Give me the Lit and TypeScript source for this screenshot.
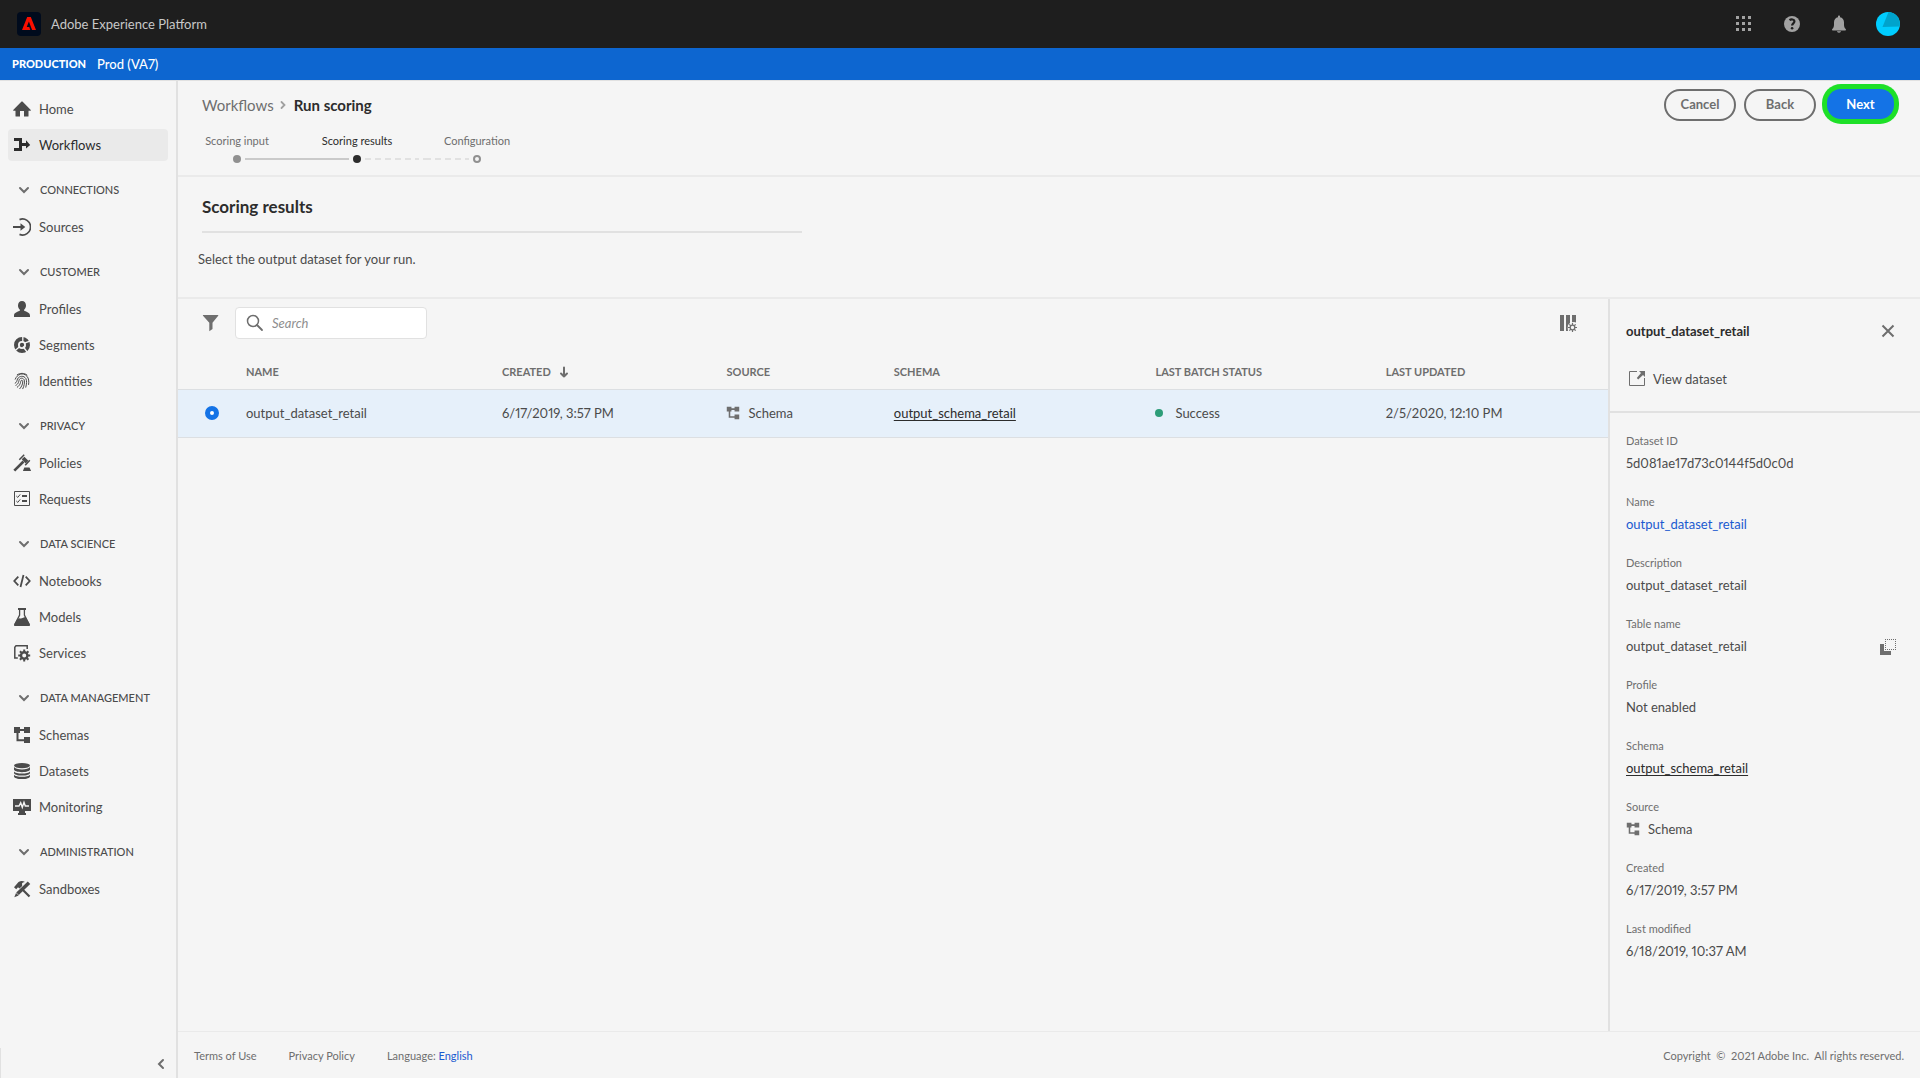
import { LitElement, html, svg, css, nothing } from "lit";
import type { SVGTemplateResult } from "lit";
import { customElement, property, state } from "lit/decorators.js";
import { classMap } from "lit/directives/class-map.js";

const gearTeeth = (cx: number, cy: number, inner: number, outer: number, width: number) =>
  [0, 45, 90, 135, 180, 225, 270, 315].map(
    (a) => svg`<path d="M${cx} ${cy - inner}V${cy - outer}" stroke="currentColor" stroke-width=${width} transform="rotate(${a} ${cx} ${cy})"/>`
  );

const GLYPHS: Record<string, SVGTemplateResult> = {
  home: svg`<path fill="currentColor" d="M9 1.4a.6.6 0 0 1 .45.2L17.8 10c.3.35.1.8-.35.8H15.5V16a.5.5 0 0 1-.5.5h-4V11H7v5.500H3a.5.5 0 0 1-.5-.5v-5.200H.55c-.45 0-.65-.45-.35-.8L8.550 1.600A.6.6 0 0 1 9 1.400z"/>`,
  workflows: svg`<path fill="currentColor" d="M1 2h8v5h4V4.300L17.200 9 13 12.500V10H9v5H1v-3h5V5H1z"/>`,
  sources: svg`<path fill="none" stroke="currentColor" stroke-width="1.700" d="M6.500 1.600A8 8 0 1 1 6.500 16.400"/><path fill="currentColor" d="M0 8h7.500V5.200L12.300 9 7.500 12.800V10H0z"/>`,
  profiles: svg`<path fill="currentColor" d="M9 1c2.500 0 4 1.900 4 4.400 0 1.700-.7 3.200-1.700 4.200-.3.400-.3 1.200.3 1.500C14.300 12 17 13 17 15.700V17H1v-1.300C1 13 3.700 12 6.400 11.100c.6-.3.600-1.100.3-1.500C5.700 8.600 5 7.100 5 5.400 5 2.900 6.500 1 9 1z"/>`,
  segments: svg`<circle cx="9" cy="9" r="6" fill="none" stroke="currentColor" stroke-width="4"/><circle cx="9" cy="9" r="2.200" fill="currentColor"/><path class="cut" d="M9.800 6V0M11.500 7.200 17.500 4.800M10 10.500l4.500 6M6.500 10.800 2 14.800" stroke-width="1.300"/>`,
  identities: svg`<g fill="none" stroke="currentColor" stroke-width="1" stroke-linecap="round"><path d="M4.200 2.800C7 .8 11.300.800 14 3"/><path d="M2.200 7.200C4 2.300 10-.3 14 4.300c1.800 2.200 2.100 5 1.600 8.200"/><path d="M2.200 11.200c1.800-.8 1.700-2.800 2.300-4.200C6.300 3.500 11 3.500 12.800 6.500c1.200 2.200.9 5.300 0 8.700"/><path d="M2.900 13.300c3-1.500 2.700-4 3.300-5.600 1-2.200 4.200-2 5 .3.700 2.500-.1 6-1.400 8.700"/><path d="M4.300 15.200C7.300 13 7.500 10.700 7.800 9c.3-1 1.700-.9 1.900.2.200 2.500-.9 5.400-2.900 7.500"/></g>`,
  policies: svg`<path fill="none" stroke="currentColor" stroke-width="2.600" d="M1.300 16.700 10.500 7.500"/><path fill="none" stroke="currentColor" stroke-width="1.500" d="M6.300 5.700 11.200.8M12.200 11.200l4.600-5"/><path fill="currentColor" d="m8.700 5.300 2.700-2.600 4 4-2.700 2.700zM11.300 13.500h5.200l1.500 3.200V17h-8v-.3z"/>`,
  requests: svg`<path fill="none" stroke="currentColor" d="M1.500 1.500h15v14h-15z"/><path fill="none" stroke="currentColor" stroke-width="1" d="m3.300 6 1.500 1.400 2.400-3M3.300 11l1.500 1.400 2.400-3"/><path fill="currentColor" d="M9 5h5v2H9zM9 10h5v2H9z"/>`,
  notebooks: svg`<path fill="none" stroke="currentColor" stroke-width="1.800" d="M5.300 4.700 1.300 9l4 4.300M12.700 4.700l4 4.300-4 4.300M10.500 3l-3 12"/>`,
  models: svg`<path fill="currentColor" d="M5 0h8v2H5z"/><path fill="none" stroke="currentColor" stroke-width="1.300" d="M6.600 1v6L2 16.400M11.400 1v6L16 16.400"/><path fill="currentColor" d="m4.200 11 2.300-.8c2 .8 4-.8 6.300-1.200L17 16.500c.2.900-.2 1.500-1 1.500H2c-.8 0-1.200-.6-1-1.500z"/>`,
  services: svg`<path fill="none" stroke="currentColor" stroke-width="1.500" d="M4.800 14H1.800V3.200L3 1.800h11.200V5"/><circle cx="11.200" cy="11.500" r="3.200" fill="none" stroke="currentColor" stroke-width="2.400"/>${gearTeeth(11.200, 11.500, 3.500, 6, 2)}`,
  schemas: svg`<path fill="none" stroke="currentColor" stroke-width="2" d="M6 4h6M4.500 5v9.200H12"/><path fill="currentColor" d="M1 1h6v6H1zM11 1h6v6h-6zM11 11h6v6h-6z"/>`,
  datasets: svg`<ellipse cx="9" cy="3.600" rx="8" ry="2.600" fill="currentColor"/><path fill="currentColor" d="M1 5c1 1.700 4 2.400 8 2.400S16 6.700 17 5v2.600c0 1.500-3.500 2.600-8 2.600S1 9.100 1 7.600zM1 9.400c1 1.400 4 2.100 8 2.100s7-.7 8-2.100v1.500c0 1.500-3.500 2.600-8 2.600s-8-1.100-8-2.600zM1 12.700c1 1.400 4 2.100 8 2.100s7-.7 8-2.100v1.700c0 1.500-3.500 2.600-8 2.600s-8-1.100-8-2.600z"/>`,
  monitoring: svg`<path fill="currentColor" d="M0 1h18v12h-6v2h1v2H5v-2h1v-2H0z"/><path class="cut" fill="none" stroke-width="1.400" d="M2 8h4l1.700-3.300 1.600 4.600 1.700-5L12.300 8H16"/>`,
  sandboxes: svg`<path fill="none" stroke="currentColor" stroke-width="2.200" d="M9 9l7.500 7.500"/><path fill="none" stroke="currentColor" stroke-width="3.600" d="m16 2.800-11.500 11"/><path fill="currentColor" d="M3 13 5.700 15.600 1.300 17.200zM1 7.200 5.500 2C8 .5 10 .7 12 2c-1.700.2-2.600.6-3 1.500L9.200 6 6.500 8.600 5 7.200 3.200 9.200z"/>`,
  down: svg`<path fill="none" stroke="currentColor" stroke-width="2" stroke-linecap="round" d="m5 7 4 4 4-4"/>`,
  left: svg`<path fill="none" stroke="currentColor" stroke-width="2" stroke-linecap="round" d="M11 5 7 9l4 4"/>`,
  right: svg`<path fill="none" stroke="currentColor" stroke-width="1.800" stroke-linecap="round" d="m6.500 6 3 3-3 3"/>`,
  apps: svg`<path fill="currentColor" d="M1 1h3v3H1zM7 1h3v3H7zM13 1h3v3h-3zM1 7h3v3H1zM7 7h3v3H7zM13 7h3v3h-3zM1 13h3v3H1zM7 13h3v3H7zM13 13h3v3h-3z"/>`,
  help: svg`<circle cx="10" cy="9" r="8" fill="currentColor"/><path class="dark" fill="none" stroke-width="2.200" d="M7.500 5.200c1.600-1.200 4.900-1 4.900 1.300 0 1.800-2.300 1.900-2.300 4"/><circle class="dark-dot" cx="10.100" cy="13.300" r="1.300"/>`,
  bell: svg`<path fill="currentColor" d="M9 2.200V1.500c0-.7.400-1 1-1s1 .3 1 1v.7c2.500.5 4 2.300 4 5v2.600c0 2 .6 3.200 1.700 4.200.5.500.3 1.500-.4 1.500H3.700c-.7 0-.9-1-.4-1.500C4.400 13 5 11.800 5 9.800V7.200c0-2.700 1.500-4.500 4-5zM8 16.300h4c0 .8-.8 1.400-2 1.400s-2-.6-2-1.400z"/>`,
  filter: svg`<path fill="currentColor" d="M1.300 1h14.600c.4 0 .6.500.3.800L10.500 8.700V15L7.300 17.200V8.700L1 1.800c-.3-.3-.1-.8.3-.8z"/>`,
  search: svg`<circle cx="7" cy="7" r="5.500" fill="none" stroke="currentColor" stroke-width="1.500"/><path fill="none" stroke="currentColor" stroke-width="1.800" stroke-linecap="round" d="m11 11 5 5"/>`,
  columns: svg`<path fill="currentColor" d="M1 1h4v16H1zM7 1h4v8l-2 2-.3 3L9 17H7zM13 1h4v7.500l-2-.5-2 .3z"/><circle cx="13.500" cy="13.500" r="2.300" fill="none" stroke="currentColor" stroke-width="1.300"/>${gearTeeth(13.500, 13.500, 2.500, 4.500, 1.200)}`,
  sort: svg`<path fill="none" stroke="currentColor" stroke-width="2" stroke-linecap="round" stroke-linejoin="round" d="M9 4.500v9M6 10.500 9 13.500l3-3"/>`,
  close: svg`<path fill="none" stroke="currentColor" stroke-width="2" d="m3.500 3.500 11 11M14.500 3.500l-11 11"/>`,
  open: svg`<path fill="none" stroke="currentColor" d="M9 1.500H1.500v14h15V8"/><path fill="currentColor" d="M11 1h6v6l-2-2-4.800 4.500L8.800 8 13 3z"/>`,
  copy: svg`<path fill="currentColor" d="M1 6h4v7h7v4H1z"/><path fill="none" stroke="currentColor" stroke-dasharray="1 1" d="M6 1.500h11M6 11.500h11M6.500 1v11M16.500 1v11"/>`,
};

const icon = (name: string, extra = "") =>
  html`<svg class="icon ${extra}" viewBox="0 0 18 18" aria-hidden="true">${GLYPHS[name]}</svg>`;

const ICON_STYLES = css`
  * {
    box-sizing: border-box;
  }
  .icon {
    display: block;
    width: 18px;
    height: 18px;
    flex: none;
  }
  button {
    font: inherit;
    color: inherit;
    background: none;
    border: 0;
    padding: 0;
    cursor: pointer;
  }
  a {
    color: inherit;
    text-decoration: none;
  }
`;

interface NavItem {
  icon: string;
  label: string;
}
interface NavGroup {
  title?: string;
  items: NavItem[];
}

const NAV: NavGroup[] = [
  { items: [{ icon: "home", label: "Home" }, { icon: "workflows", label: "Workflows" }] },
  { title: "CONNECTIONS", items: [{ icon: "sources", label: "Sources" }] },
  {
    title: "CUSTOMER",
    items: [
      { icon: "profiles", label: "Profiles" },
      { icon: "segments", label: "Segments" },
      { icon: "identities", label: "Identities" },
    ],
  },
  { title: "PRIVACY", items: [{ icon: "policies", label: "Policies" }, { icon: "requests", label: "Requests" }] },
  {
    title: "DATA SCIENCE",
    items: [
      { icon: "notebooks", label: "Notebooks" },
      { icon: "models", label: "Models" },
      { icon: "services", label: "Services" },
    ],
  },
  {
    title: "DATA MANAGEMENT",
    items: [
      { icon: "schemas", label: "Schemas" },
      { icon: "datasets", label: "Datasets" },
      { icon: "monitoring", label: "Monitoring" },
    ],
  },
  { title: "ADMINISTRATION", items: [{ icon: "sandboxes", label: "Sandboxes" }] },
];

@customElement("side-nav")
export class SideNav extends LitElement {
  @property() current = "Workflows";
  @state() private closed: string[] = [];

  static styles = [
    ICON_STYLES,
    css`
      :host {
        display: flex;
        flex-direction: column;
        justify-content: space-between;
        border-right: 2px solid #e1e1e1;
        color: #4b4b4b;
      }
      nav {
        padding: 12px 8px;
      }
      ul {
        list-style: none;
        margin: 0;
        padding: 0;
        display: grid;
        gap: 4px;
      }
      .link {
        display: flex;
        align-items: center;
        gap: 8px;
        height: 32px;
        padding: 0 5px;
        border-radius: 4px;
      }
      .link.current {
        background: #eaeaea;
        color: #2c2c2c;
      }
      .heading {
        display: flex;
        align-items: center;
        gap: 7px;
        width: 100%;
        height: 34px;
        margin: 12px 0 4px;
        padding: 0 7px;
        font-size: 11px;
        font-weight: 500;
        text-align: left;
      }
      .heading .icon {
        color: #6e6e6e;
      }
      .cut {
        stroke: #f5f5f5;
      }
      .collapse {
        display: flex;
        justify-content: flex-end;
        align-items: center;
        height: 30px;
        border-left: 1px solid #e1e1e1;
        padding: 2px 6px 0 0;
        color: #6e6e6e;
      }
    `,
  ];

  private toggle(title: string) {
    this.closed = this.closed.includes(title) ? this.closed.filter((t) => t !== title) : [...this.closed, title];
  }

  render() {
    return html`
      <nav aria-label="Main">
        ${NAV.map(
          (group) => html`
            ${group.title
              ? html`<button class="heading" @click=${() => this.toggle(group.title!)}>${icon("down")}${group.title}</button>`
              : nothing}
            ${group.title && this.closed.includes(group.title)
              ? nothing
              : html`<ul>
                  ${group.items.map(
                    (item) => html`<li>
                      <a href="#" class=${classMap({ link: true, current: item.label === this.current })}
                        >${icon(item.icon)}<span>${item.label}</span></a
                      >
                    </li>`
                  )}
                </ul>`}
          `
        )}
      </nav>
      <div class="collapse"><button aria-label="Collapse navigation">${icon("left")}</button></div>
    `;
  }
}

@customElement("step-list")
export class StepList extends LitElement {
  @property({ type: Number }) active = 1;

  static styles = css`
    :host {
      display: block;
      margin-left: -1px;
    }
    ol {
      display: flex;
      list-style: none;
      margin: 0;
      padding: 0;
      font-size: 11px;
      line-height: 16px;
      color: #6e6e6e;
    }
    li {
      display: grid;
      justify-items: center;
      gap: 6px;
      width: 120px;
    }
    .current {
      color: #2c2c2c;
    }
    .track {
      display: grid;
      grid-template-columns: 1fr 8px 1fr;
      column-gap: 4px;
      align-items: center;
      width: 100%;
    }
    .dot {
      grid-column: 2;
      width: 8px;
      height: 8px;
      border-radius: 50%;
      background: #909090;
      box-sizing: border-box;
    }
    .current .dot {
      background: #2c2c2c;
    }
    .todo .dot {
      background: none;
      border: 2px solid #909090;
    }
    .line {
      height: 2px;
      background: #cacaca;
    }
    .line.ahead {
      background: repeating-linear-gradient(90deg, #e1e1e1 0 6px, transparent 6px 10px);
    }
    .line.ahead:first-child {
      background-position: 8px 0;
    }
  `;

  render() {
    const steps = ["Scoring input", "Scoring results", "Configuration"];
    return html`<ol>
      ${steps.map(
        (label, i) => html`<li class=${classMap({ current: i === this.active, todo: i > this.active })}>
          <span>${label}</span>
          <span class="track">
            ${i > 0 ? html`<span class=${classMap({ line: true, ahead: i > this.active })}></span>` : nothing}
            <span class="dot"></span>
            ${i < steps.length - 1
              ? html`<span class=${classMap({ line: true, ahead: i >= this.active })}></span>`
              : nothing}
          </span>
        </li>`
      )}
    </ol>`;
  }
}

@customElement("dataset-table")
export class DatasetTable extends LitElement {
  static styles = [
    ICON_STYLES,
    css`
      :host {
        display: block;
      }
      .toolbar {
        display: flex;
        align-items: center;
        gap: 15px;
        padding: 8px 31px 8px 24px;
        color: #6e6e6e;
      }
      .search {
        display: flex;
        align-items: center;
        gap: 8px;
        width: 192px;
        height: 32px;
        padding: 0 10px;
        border: 1px solid #e1e1e1;
        border-radius: 4px;
        background: #fff;
      }
      .search input {
        flex: 1;
        min-width: 0;
        border: 0;
        padding: 0;
        outline: 0;
        background: none;
        font: inherit;
        color: #4b4b4b;
      }
      .search input::placeholder {
        color: #8e8e8e;
        font-style: italic;
        opacity: 1;
      }
      .settings {
        margin-left: auto;
      }
      table {
        width: 100%;
        table-layout: fixed;
        border-collapse: collapse;
        text-align: left;
      }
      .c-pick {
        width: 68px;
      }
      .c-name {
        width: 17.9%;
      }
      .c-created {
        width: 15.7%;
      }
      .c-source {
        width: 11.7%;
      }
      .c-schema {
        width: 18.3%;
      }
      .c-status {
        width: 16.1%;
      }
      th,
      td {
        padding: 0;
      }
      th {
        height: 42px;
        padding-top: 8px;
        font-size: 11px;
        font-weight: 700;
        color: #6e6e6e;
      }
      .sort,
      .cell {
        display: flex;
        align-items: center;
      }
      .sort {
        gap: 4px;
        font-weight: 700;
      }
      .cell {
        gap: 8px;
      }
      .cell .icon {
        width: 14px;
        height: 14px;
        color: #6e6e6e;
      }
      td {
        height: 48px;
        background: #e6f0fa;
        border-top: 1px solid #dcdfe2;
        border-bottom: 1px solid #dcdfe2;
      }
      .radio {
        display: block;
        appearance: none;
        width: 14px;
        height: 14px;
        margin: 0 0 0 27px;
        border: 5px solid #1473e6;
        border-radius: 50%;
        background: #fff;
      }
      .schema {
        color: #2c2c2c;
        text-decoration: underline;
        text-decoration-skip-ink: none;
        text-underline-offset: 2px;
      }
      .ok {
        width: 8px;
        height: 8px;
        margin-right: 4px;
        border-radius: 50%;
        background: #2d9d78;
      }
    `,
  ];

  render() {
    return html`
      <div class="toolbar">
        <button aria-label="Filter">${icon("filter")}</button>
        <label class="search">${icon("search")}<input type="text" placeholder="Search" aria-label="Search" /></label>
        <button class="settings" aria-label="Column settings">${icon("columns")}</button>
      </div>
      <table>
        <colgroup>
          <col class="c-pick" />
          <col class="c-name" />
          <col class="c-created" />
          <col class="c-source" />
          <col class="c-schema" />
          <col class="c-status" />
          <col />
        </colgroup>
        <thead>
          <tr>
            <th></th>
            <th scope="col">NAME</th>
            <th scope="col"><button class="sort">CREATED ${icon("sort")}</button></th>
            <th scope="col">SOURCE</th>
            <th scope="col">SCHEMA</th>
            <th scope="col">LAST BATCH STATUS</th>
            <th scope="col">LAST UPDATED</th>
          </tr>
        </thead>
        <tbody>
          <tr>
            <td><input class="radio" type="radio" name="dataset" checked aria-label="Select output_dataset_retail" /></td>
            <td>output_dataset_retail</td>
            <td>6/17/2019, 3:57 PM</td>
            <td><span class="cell">${icon("schemas")}Schema</span></td>
            <td><a class="schema" href="#">output_schema_retail</a></td>
            <td><span class="cell"><span class="ok"></span>Success</span></td>
            <td>2/5/2020, 12:10 PM</td>
          </tr>
        </tbody>
      </table>
    `;
  }
}

@customElement("dataset-details")
export class DatasetDetails extends LitElement {
  static styles = [
    ICON_STYLES,
    css`
      :host {
        display: block;
        border-left: 2px solid #e1e1e1;
      }
      .top {
        padding: 22px 23px 22px 16px;
        border-bottom: 2px solid #e1e1e1;
      }
      .title {
        display: flex;
        align-items: center;
        justify-content: space-between;
        height: 20px;
      }
      h2 {
        margin: 0;
        font-size: 13px;
        font-weight: 700;
        color: #2c2c2c;
      }
      .icon {
        color: #6e6e6e;
      }
      .view {
        display: flex;
        align-items: center;
        gap: 7px;
        height: 20px;
        margin-top: 28px;
        padding-left: 2px;
      }
      dl {
        display: grid;
        gap: 17px;
        margin: 0;
        padding: 18px 23px 18px 16px;
      }
      dt {
        height: 20px;
        font-size: 11px;
        line-height: 20px;
        color: #6e6e6e;
      }
      dd {
        display: flex;
        align-items: center;
        height: 24px;
        margin: 0;
      }
      .copy {
        margin-left: auto;
        padding-top: 2px;
      }
      .link {
        color: #1b5ad0;
      }
      .schema {
        color: #2c2c2c;
        text-decoration: underline;
        text-decoration-skip-ink: none;
        text-underline-offset: 2px;
      }
      .small .icon {
        width: 14px;
        height: 14px;
        margin-right: 8px;
      }
    `,
  ];

  render() {
    const row = (label: string, value: unknown, cls = "") =>
      html`<div>
        <dt>${label}</dt>
        <dd class=${cls}>${value}</dd>
      </div>`;
    return html`
      <div class="top">
        <div class="title">
          <h2>output_dataset_retail</h2>
          <button aria-label="Close">${icon("close")}</button>
        </div>
        <a class="view" href="#">${icon("open")}<span>View dataset</span></a>
      </div>
      <dl>
        ${row("Dataset ID", "5d081ae17d73c0144f5d0c0d")}
        ${row("Name", html`<a class="link" href="#">output_dataset_retail</a>`)}
        ${row("Description", "output_dataset_retail")}
        ${row("Table name", html`output_dataset_retail<button class="copy" aria-label="Copy table name">${icon("copy")}</button>`)}
        ${row("Profile", "Not enabled")}
        ${row("Schema", html`<a class="schema" href="#">output_schema_retail</a>`)}
        ${row("Source", html`${icon("schemas")}Schema`, "small")}
        ${row("Created", "6/17/2019, 3:57 PM")}
        ${row("Last modified", "6/18/2019, 10:37 AM")}
      </dl>
    `;
  }
}

@customElement("app-root")
export class AppRoot extends LitElement {
  static styles = [
    ICON_STYLES,
    css`
      :host {
        display: block;
        min-height: 100vh;
        padding-bottom: 2px;
        box-sizing: border-box;
        background: #fff;
        font-family: Lato, "Liberation Sans", sans-serif;
        font-variant-numeric: proportional-nums;
        font-size: 13px;
        line-height: 20px;
        color: #4b4b4b;
      }
      .page {
        display: grid;
        grid-template-rows: 48px 32px 1fr;
        min-height: calc(100vh - 2px);
        background: #f5f5f5;
      }
      .shell {
        display: flex;
        align-items: center;
        padding: 0 20px 0 17px;
        background: #1e1e1e;
        color: #c8c8c8;
      }
      .logo {
        width: 24px;
        height: 24px;
        margin-right: 10px;
      }
      .tools {
        display: flex;
        align-items: center;
        gap: 29px;
        margin-left: auto;
        color: #a2a2a2;
      }
      .tools button:last-child .icon {
        width: 24px;
        height: 24px;
      }
      .dark {
        stroke: #1e1e1e;
      }
      .dark-dot {
        fill: #1e1e1e;
      }
      .env {
        display: flex;
        align-items: center;
        gap: 11px;
        padding: 0 12px;
        background: #0d66d0;
        color: #fff;
        font-weight: 500;
      }
      .env strong {
        font-size: 11px;
        font-weight: 900;
      }
      .body {
        display: grid;
        grid-template-columns: 178px minmax(0, 1fr);
        border-top: 1px solid #e1e1e1;
      }
      main {
        display: flex;
        flex-direction: column;
      }
      .head {
        display: flex;
        justify-content: space-between;
        height: 96px;
        padding: 8px 26px 0 0;
        border-bottom: 2px solid #eaeaea;
      }
      .crumbs {
        display: flex;
        align-items: center;
        height: 20px;
        margin: 6px 0 18px 24px;
        font-size: 15px;
        color: #6e6e6e;
      }
      .crumbs .icon {
        margin: 0 1px;
        color: #a0a0a0;
      }
      .crumbs strong {
        color: #2c2c2c;
      }
      .actions {
        display: flex;
        align-items: flex-start;
        gap: 8px;
      }
      .action {
        width: 72px;
        height: 32px;
        border: 2px solid #6e6e6e;
        border-radius: 16px;
        color: #6e6e6e;
        font-weight: 700;
        line-height: 26px;
        padding-bottom: 2px;
      }
      .action.next {
        width: 67px;
        height: 30px;
        margin-left: 3px;
        border: 0;
        border-radius: 14px;
        background: #1473e6;
        color: #fff;
        box-shadow: 0 0 0 5px #1ee028;
        padding: 0;
      }
      .intro {
        height: 122px;
        padding: 20px 20px 0;
        border-bottom: 2px solid #eaeaea;
      }
      h1 {
        width: 600px;
        margin: 0 0 16px 4px;
        padding-bottom: 14px;
        border-bottom: 2px solid #e1e1e1;
        font-size: 17px;
        font-weight: 700;
        color: #2c2c2c;
      }
      p {
        margin: 0;
      }
      .work {
        display: grid;
        grid-template-columns: minmax(0, 1fr) 312px;
        flex: 1;
      }
      footer {
        display: flex;
        align-items: center;
        gap: 32px;
        height: 47px;
        padding: 2px 16px 0;
        border-top: 1px solid #eaeaea;
        font-size: 11px;
        color: #6e6e6e;
      }
      footer .lang {
        color: #1b5ad0;
      }
      .legal {
        margin-left: auto;
        white-space: pre;
      }
    `,
  ];

  render() {
    return html`
      <div class="page">
        <header class="shell">
          <svg class="logo" viewBox="0 0 24 24" aria-hidden="true">
            <rect width="24" height="24" rx="4" fill="#000b1d" />
            <path fill="#fa0f00" d="M13.300 18 12.300 15.100H9.700L11.900 9.500 15.100 18H19L13.800 5H10.200L5 18z" />
          </svg>
          <span>Adobe Experience Platform</span>
          <div class="tools">
            <button aria-label="Apps">${icon("apps")}</button>
            <button aria-label="Help">${icon("help")}</button>
            <button aria-label="Notifications">${icon("bell")}</button>
            <button aria-label="Account">
              <svg class="icon" viewBox="0 0 24 24" aria-hidden="true">
                <circle cx="12" cy="12" r="12" fill="#00cdff" />
                <path fill="#00a3cc" d="M12.500 0A12 12 0 0 1 23.600 14.500L6.500 15z" />
              </svg>
            </button>
          </div>
        </header>
        <div class="env"><strong>PRODUCTION</strong><span>Prod (VA7)</span></div>
        <div class="body">
          <side-nav></side-nav>
          <main>
            <div class="head">
              <div>
                <nav class="crumbs" aria-label="Breadcrumb">
                  <a href="#">Workflows</a>${icon("right")}<strong>Run scoring</strong>
                </nav>
                <step-list></step-list>
              </div>
              <div class="actions">
                <button class="action">Cancel</button>
                <button class="action">Back</button>
                <button class="action next">Next</button>
              </div>
            </div>
            <section class="intro">
              <h1>Scoring results</h1>
              <p>Select the output dataset for your run.</p>
            </section>
            <div class="work">
              <dataset-table></dataset-table>
              <dataset-details></dataset-details>
            </div>
            <footer>
              <a href="#">Terms of Use</a>
              <a href="#">Privacy Policy</a>
              <span>Language: <a class="lang" href="#">English</a></span>
              <span class="legal">Copyright  ©  2021 Adobe Inc.  All rights reserved.</span>
            </footer>
          </main>
        </div>
      </div>
    `;
  }
}
